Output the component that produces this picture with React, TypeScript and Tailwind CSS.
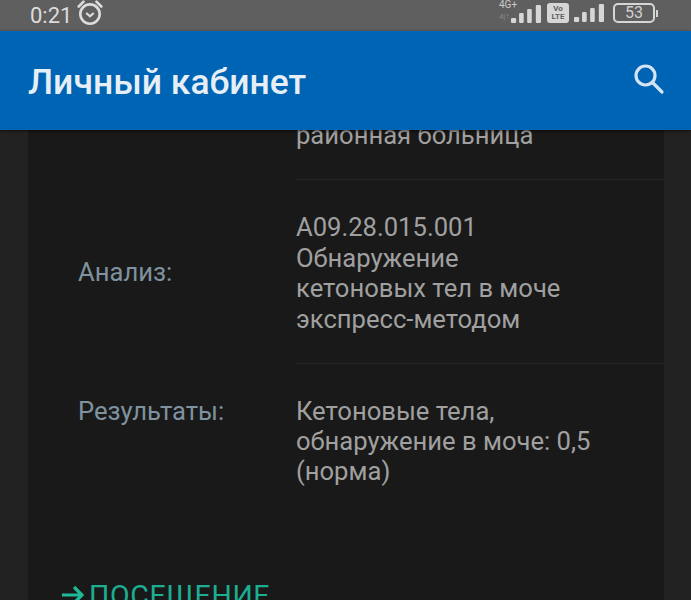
import React from "react";

const Signal = ({ className = "" }: { className?: string }) => (
  <svg width="30" height="20" viewBox="0 0 26 20" preserveAspectRatio="none" className={className} fill="#d6d6d6">
    <rect x="0" y="14" width="4.5" height="5" rx="1" />
    <rect x="7" y="9" width="4" height="10" rx="1" />
    <rect x="14" y="5" width="4" height="14" rx="1" />
    <rect x="21.5" y="1" width="4.5" height="18" rx="1" />
  </svg>
);

export default function App() {
  return (
    <div className="relative flex flex-col h-[600px] w-[691px] overflow-hidden bg-[#222222] font-['Roboto',sans-serif]">
      <div className="relative z-10 shrink-0 h-[31px] bg-[#5f5f5f] flex items-center justify-between text-[#dcdcdc]">
        <div className="flex items-center pl-[30px] text-[22px] leading-none">
          <span>0:21</span>
          <svg width="28" height="28" viewBox="0 0 26 26" fill="none" stroke="#dcdcdc" strokeWidth="2.4" className="ml-[4px] -mt-[6px]">
            <circle cx="13" cy="14" r="9" />
            <path d="M9.5 13l3.5 3 3.5-3" strokeWidth="2" />
            <path d="M2.5 7L7 2.5M23.5 7L19 2.5" strokeLinecap="round" />
          </svg>
        </div>
        <div className="flex items-center pr-[33px] -mt-[5px]">
          <div className="relative w-[30px] h-[22px]">
            <span className="absolute -left-[12px] -top-[2px] text-[10px] leading-none text-[#c9c9c9]">4G+</span>
            <span className="absolute -left-[12px] top-[11px] text-[8px] leading-none text-[#8a8a8a]">4|↑</span>
            <Signal className="absolute left-0 top-[2px]" />
          </div>
          <div className="ml-[6px] w-[22px] h-[20px] rounded-[3px] bg-[#d6d6d6] flex flex-col items-center justify-center text-[8px] leading-[8px] font-bold text-[#5f5f5f]">
            <span>Vo</span>
            <span>LTE</span>
          </div>
          <Signal className="ml-[5px]" />
          <div className="ml-[9px] w-[42px] h-[20px] rounded-[5px] border-2 border-[#d6d6d6] flex items-center justify-center text-[16px] leading-none text-[#d0d0d0]">
            53
          </div>
          <div className="ml-[1px] w-[2px] h-[7px] bg-[#d6d6d6]" />
        </div>
      </div>

      <header className="relative z-10 shrink-0 h-[99px] bg-[#0064b4] flex items-center justify-between pl-[28px] pr-[24px] shadow-[0_1px_3px_rgba(0,0,0,0.6)]">
        <h1 className="text-[35.5px] leading-none font-medium text-[#e6eef6] mt-[5px]">Личный кабинет</h1>
        <svg width="36" height="36" viewBox="0 0 36 36" fill="none" stroke="#d4e4f4" strokeWidth="3.2" className="-mt-[4px]">
          <circle cx="14.5" cy="14.5" r="9.5" />
          <path d="M21.5 21.5L31 31" strokeLinecap="round" />
        </svg>
      </header>

      <main className="flex-1 mx-[28px] w-[636px] bg-[#191919] -mt-[10px] text-[25.6px] leading-[30.5px]">
        <div className="flex">
          <div className="w-[268px] shrink-0" />
          <div className="flex-1 h-[60px] text-[#a0a0a0] border-b border-[#262626] whitespace-nowrap">районная больница</div>
        </div>
        <div className="flex items-center">
          <div className="w-[268px] pl-[50px] shrink-0 text-[#7f929f]">Анализ:</div>
          <div className="flex-1 pt-[32px] pb-[29px] border-b border-[#262626] text-[#a0a0a0]">
            {["А09.28.015.001", "Обнаружение", "кетоновых тел в моче", "экспресс-методом"].map((l) => (
              <div key={l} className="h-[30.5px] whitespace-nowrap">{l}</div>
            ))}
          </div>
        </div>
        <div className="flex items-start pt-[32px] leading-[30px]">
          <div className="w-[268px] pl-[50px] shrink-0 text-[#7f929f]">Результаты:</div>
          <div className="text-[#a0a0a0] whitespace-nowrap">
            <div>Кетоновые тела,</div>
            <div>обнаружение в моче: 0,5</div>
            <div>(норма)</div>
          </div>
        </div>
        <div className="mt-[95px] pl-[33px] flex items-center text-[#1cae90] text-[28.5px] leading-[30px] tracking-[0.65px]">
          <svg width="24" height="22" viewBox="0 0 24 22" fill="none" stroke="#1fb898" strokeWidth="3.2" className="mr-[4px] shrink-0 -mt-[3px]">
            <path d="M1 11H21M13 3l8 8-8 8" />
          </svg>
          <span>ПОСЕЩЕНИЕ</span>
        </div>
      </main>
    </div>
  );
}
